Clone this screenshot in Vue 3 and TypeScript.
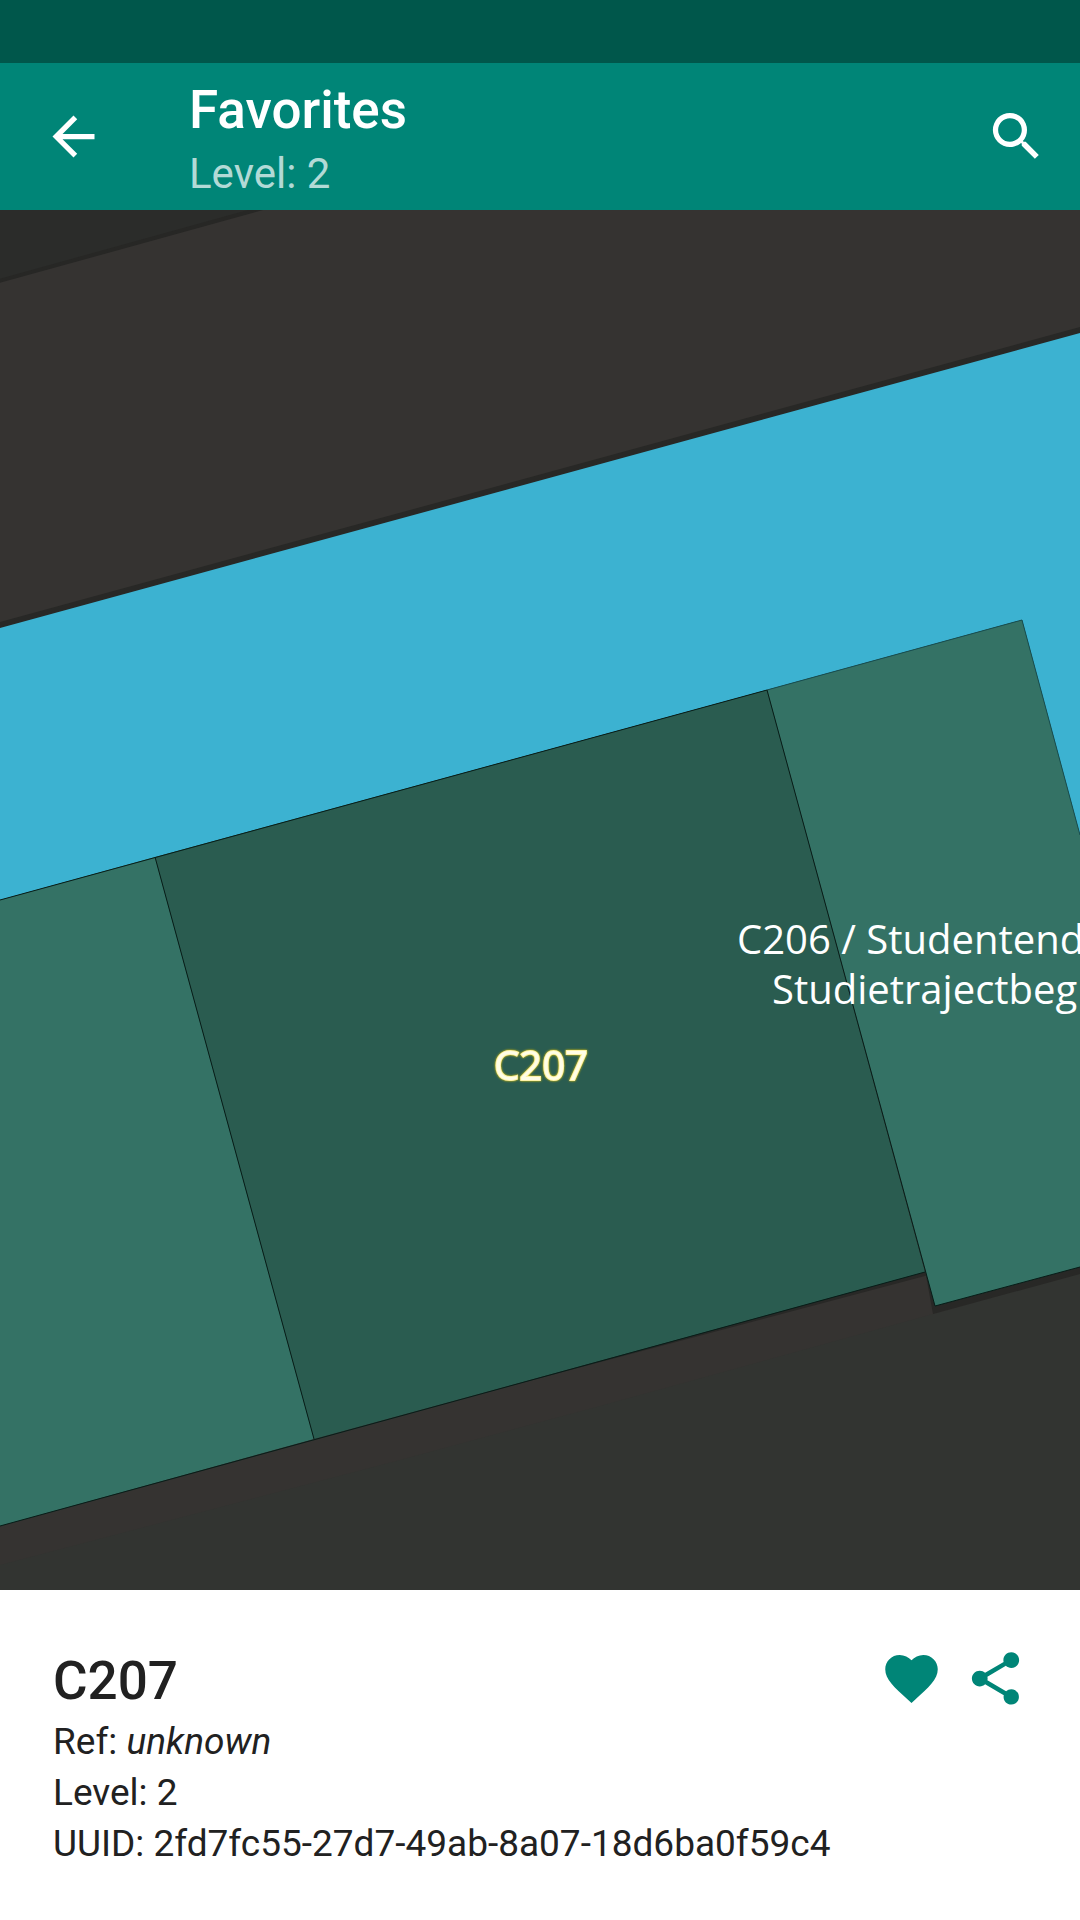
<script setup lang="ts">
import { ref } from 'vue'

interface Area {
  points: string
  kind: string
}

const room = {
  name: 'C207',
  level: '2',
  uuid: '2fd7fc55-27d7-49ab-8a07-18d6ba0f59c4',
}

const favorite = ref(true)

const areas: Area[] = [
  { kind: 'outside', points: '0,0 254,0 0,70' },
  { kind: 'ground', points: '0,1355 400,1250 600,1196 933,1104 1080,1063 1080,1380 0,1380' },
  { kind: 'shade', points: '0,412 1080,117 1080,124 0,419' },
  { kind: 'hallway', points: '0,418 1080,123 1080,625 1022,410 0,690' },
  { kind: 'shade', points: '480,1184 925,1060 933,1104 1080,1064 1080,1057 935,1096 928,1065 925,1066' },
  { kind: 'room', points: '0,690 155,647 314,1229 0,1316' },
  { kind: 'room', points: '767,480 1022,410 1080,625 1080,1057 935,1096' },
  { kind: 'selected', points: '155,647 767,480 925,1062 314,1229' },
]
</script>

<template>
  <div class="page">
    <header>
      <div class="status"></div>
      <div class="toolbar">
        <button class="icon" type="button" aria-label="Back">
          <svg viewBox="0 0 24 24"><path d="M20 11H7.83l5.59-5.59L12 4l-8 8 8 8 1.41-1.41L7.83 13H20v-2z" /></svg>
        </button>
        <div class="heading">
          <h1>Favorites</h1>
          <p>Level: 2</p>
        </div>
        <button class="icon" type="button" aria-label="Search">
          <svg viewBox="0 0 24 24"><path d="M15.5 14h-.79l-.28-.27A6.471 6.471 0 0 0 16 9.5 6.5 6.5 0 1 0 9.5 16c1.61 0 3.09-.59 4.23-1.57l.27.28v.79l5 4.99L20.49 19l-4.99-5zm-6 0C7.01 14 5 11.99 5 9.5S7.01 5 9.5 5 14 7.01 14 9.5 11.99 14 9.5 14z" /></svg>
        </button>
      </div>
    </header>

    <main>
      <svg class="map" viewBox="0 0 1080 1380" preserveAspectRatio="xMidYMid slice">
        <polygon v-for="(area, i) in areas" :key="i" :class="area.kind" :points="area.points" />
        <path class="outer-wall" d="M-8 73L270 -4" />
        <path class="wall" d="M0 690L767 480" />
        <path class="wall faint" d="M767 480L1022 410L1080 625" />
        <path class="wall" d="M155 647L314 1229M767 480L935 1096L1080 1057M0 1316L925 1062" />
        <text class="label">
          <tspan x="737" y="744">C206 / Studentend</tspan>
          <tspan x="772" y="794">Studietrajectbeg</tspan>
        </text>
        <text class="label current" x="541" y="870">{{ room.name }}</text>
      </svg>
    </main>

    <section class="details">
      <div class="info">
        <h2>{{ room.name }}</h2>
        <p>Ref: <em>unknown</em></p>
        <p>Level: {{ room.level }}</p>
        <p>UUID: {{ room.uuid }}</p>
      </div>
      <div class="actions">
        <button class="icon" type="button" aria-label="Favorite" :aria-pressed="favorite" @click="favorite = !favorite">
          <svg viewBox="0 0 24 24"><path d="M12 21.35l-1.45-1.32C5.4 15.36 2 12.28 2 8.5 2 5.42 4.42 3 7.5 3c1.74 0 3.41.81 4.5 2.09C13.09 3.81 14.76 3 16.5 3 19.58 3 22 5.42 22 8.5c0 3.78-3.4 6.86-8.55 11.54L12 21.35z" /></svg>
        </button>
        <button class="icon" type="button" aria-label="Share">
          <svg viewBox="0 0 24 24"><path d="M18 16.08c-.76 0-1.44.3-1.96.77L8.91 12.7c.05-.23.09-.46.09-.7s-.04-.47-.09-.7l7.05-4.11c.54.5 1.25.81 2.04.81 1.66 0 3-1.34 3-3s-1.34-3-3-3-3 1.34-3 3c0 .24.04.47.09.7L8.04 9.81C7.5 9.31 6.79 9 6 9c-1.66 0-3 1.34-3 3s1.34 3 3 3c.79 0 1.5-.31 2.04-.81l7.12 4.16c-.05.21-.08.43-.08.65 0 1.61 1.31 2.92 2.92 2.92s2.92-1.31 2.92-2.92-1.31-2.92-2.92-2.92z" /></svg>
        </button>
      </div>
    </section>
  </div>
</template>

<style>
body {
  margin: 0;
}
</style>

<style scoped>
.page {
  display: flex;
  flex-direction: column;
  min-height: 100vh;
  font-family: Roboto, sans-serif;
  color: #212121;
  background: #fff;
}

h1,
h2,
p {
  margin: 0;
  font-weight: 400;
}

.status {
  height: 63px;
  background: #00574b;
}

.toolbar {
  display: flex;
  align-items: center;
  height: 147px;
  padding: 0 32px 0 42px;
  box-sizing: border-box;
  background: #008577;
  color: #fff;
}

.icon {
  flex: none;
  width: 63px;
  height: 63px;
  padding: 0;
  border: 0;
  background: none;
  color: inherit;
  cursor: pointer;
}

.icon svg {
  display: block;
  width: 100%;
  height: 100%;
  fill: currentColor;
}

.heading {
  flex: 1;
  padding: 6px 0 0 84px;
}

h1 {
  font-size: 53px;
  line-height: 68px;
  font-weight: 500;
}

.heading p {
  font-size: 42px;
  line-height: 60px;
  color: #b2dad6;
}

main {
  position: relative;
  flex: 1;
  background: #353331;
  overflow: hidden;
}

.map {
  position: absolute;
  inset: 0;
  width: 100%;
  height: 100%;
}

.outside {
  fill: #2b2c2a;
}

.ground {
  fill: #323431;
}

.shade {
  fill: #282826;
}

.hallway {
  fill: #3cb2d1;
}

.room {
  fill: #347265;
}

.selected {
  fill: #2a5c50;
}

.outer-wall {
  stroke: #272725;
  stroke-width: 4;
}

.wall {
  fill: none;
  stroke: #071d18;
  stroke-width: 1;
}

.faint {
  stroke: #174e50;
}

.label {
  font-family: "Open Sans", sans-serif;
  font-size: 40px;
  fill: #fff;
}

.current {
  text-anchor: middle;
  fill: #fffde7;
  stroke: #fff3a6;
  stroke-width: 2;
  paint-order: stroke;
  filter: drop-shadow(0 0 1px #f0cc00);
}

.details {
  display: flex;
  justify-content: space-between;
  align-items: flex-start;
  padding: 57px 53px 51px;
}

.info h2 {
  font-size: 53px;
  line-height: 69px;
  font-weight: 500;
}

.info p {
  font-size: 37px;
  line-height: 51px;
}

.actions {
  display: flex;
  gap: 21px;
  color: #008577;
}
</style>
